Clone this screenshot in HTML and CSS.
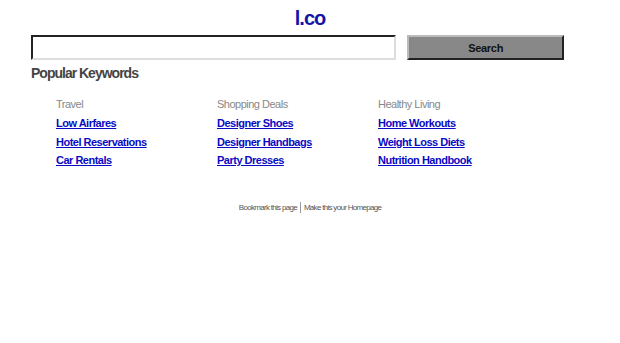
FILE: index.html
```html
<!DOCTYPE html>
<html lang="en">

<head>
    <meta charset="UTF-8">
    <meta name="viewport" content="width=device-width, initial-scale=1.0">
    <title>l.co</title>
    <link rel="stylesheet" href="styles.css">
</head>

<body>
    <div class="page">
        <h1 class="logo">l.co</h1>

        <!-- Search -->
        <form class="search" onsubmit="return false">
            <input class="search-input" type="text">
            <button class="search-button" type="submit">Search</button>
        </form>

        <h2 class="popular">Popular Keywords</h2>

        <div class="keywords">
            <div class="column">
                <div class="column-title">Travel</div>
                <a href="#">Low Airfares</a>
                <a href="#">Hotel Reservations</a>
                <a href="#">Car Rentals</a>
            </div>
            <div class="column">
                <div class="column-title">Shopping Deals</div>
                <a href="#">Designer Shoes</a>
                <a href="#">Designer Handbags</a>
                <a href="#">Party Dresses</a>
            </div>
            <div class="column">
                <div class="column-title">Healthy Living</div>
                <a href="#">Home Workouts</a>
                <a href="#">Weight Loss Diets</a>
                <a href="#">Nutrition Handbook</a>
            </div>
        </div>

        <div class="footer">
            <a href="#">Bookmark this page</a>
            <span class="divider"></span>
            <a href="#">Make this your Homepage</a>
        </div>
    </div>
</body>

</html>
```
FILE: styles.css
```css
body {
    margin: 0;
    background-color: #ffffff;
    font-family: 'Liberation Sans', Arial, sans-serif;
    color: #444444;
}

.page {
    padding: 0 31px;
}

.logo {
    margin: 0;
    padding-top: 6px;
    height: 29px;
    text-align: center;
    font-size: 20px;
    line-height: 24px;
    letter-spacing: -1px;
    color: #1414a8;
}

/* Search */
.search {
    display: flex;
    gap: 11px;
    width: 533px;
    margin: 0;
}

.search-input {
    box-sizing: border-box;
    width: 366px;
    height: 25px;
    margin: 0;
    border: 2px solid;
    border-color: #222222 #dddddd #dddddd #222222;
    background-color: #ffffff;
}

.search-button {
    box-sizing: border-box;
    width: 157px;
    height: 25px;
    margin: 0;
    border: 2px solid;
    border-color: #bbbbbb #222222 #222222 #bbbbbb;
    background-color: #888888;
    color: #111111;
    font-family: inherit;
    font-weight: bold;
    font-size: 11px;
    letter-spacing: -0.3px;
}

.popular {
    margin: 0;
    padding-top: 5px;
    font-size: 14px;
    line-height: 17px;
    letter-spacing: -1px;
    color: #444444;
}

/* Keyword columns */
.keywords {
    display: flex;
    padding: 16px 0 0 25px;
}

.column {
    display: flex;
    flex-direction: column;
    align-items: flex-start;
    width: 161px;
}

.column-title {
    font-size: 11px;
    line-height: 13px;
    letter-spacing: -0.5px;
    color: #888888;
    margin-bottom: 3px;
}

.column a {
    font-size: 11px;
    line-height: 18.5px;
    font-weight: bold;
    letter-spacing: -0.5px;
    color: #0a0ac4;
}

.footer {
    display: flex;
    justify-content: center;
    align-items: center;
    gap: 3px;
    margin-top: 32px;
    font-size: 8px;
    letter-spacing: -0.7px;
}

.footer a {
    color: #555555;
    text-decoration: none;
}

.divider {
    width: 1px;
    height: 11px;
    background-color: #999999;
}
```
